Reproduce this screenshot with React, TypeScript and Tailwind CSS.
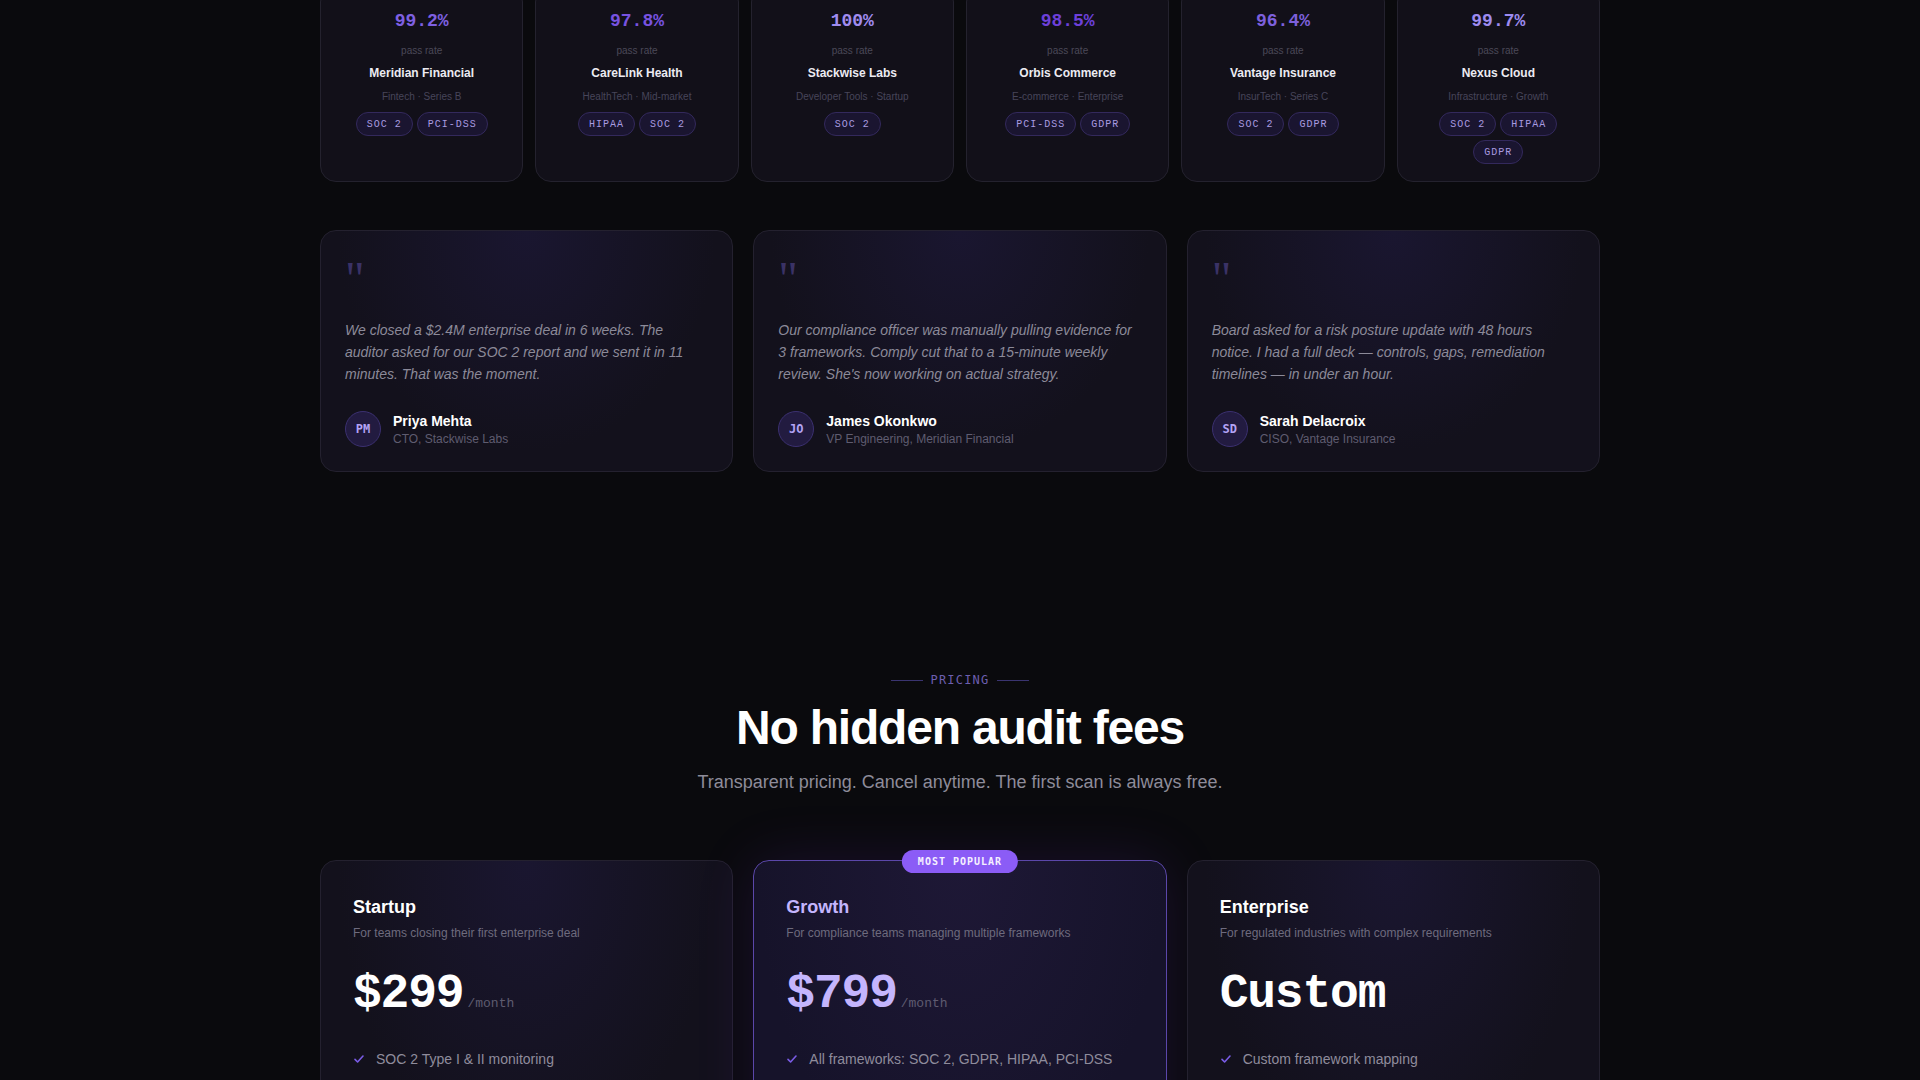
import React from "react";

type Stat = {
  rate: string;
  rateClass: string;
  name: string;
  meta: string;
  tags: string[];
};

const stats: Stat[] = [
  { rate: "99.2%", rateClass: "text-[#7f60e2]", name: "Meridian Financial", meta: "Fintech · Series B", tags: ["SOC 2", "PCI-DSS"] },
  { rate: "97.8%", rateClass: "text-[#7853e0]", name: "CareLink Health", meta: "HealthTech · Mid-market", tags: ["HIPAA", "SOC 2"] },
  { rate: "100%", rateClass: "text-[#a08cf0]", name: "Stackwise Labs", meta: "Developer Tools · Startup", tags: ["SOC 2"] },
  { rate: "98.5%", rateClass: "text-[#6d40d9]", name: "Orbis Commerce", meta: "E-commerce · Enterprise", tags: ["PCI-DSS", "GDPR"] },
  { rate: "96.4%", rateClass: "text-[#7d60dc]", name: "Vantage Insurance", meta: "InsurTech · Series C", tags: ["SOC 2", "GDPR"] },
  { rate: "99.7%", rateClass: "text-[#9d8bf0]", name: "Nexus Cloud", meta: "Infrastructure · Growth", tags: ["SOC 2", "HIPAA", "GDPR"] },
];

const quotes = [
  {
    text: "We closed a $2.4M enterprise deal in 6 weeks. The auditor asked for our SOC 2 report and we sent it in 11 minutes. That was the moment.",
    initials: "PM",
    name: "Priya Mehta",
    role: "CTO, Stackwise Labs",
  },
  {
    text: "Our compliance officer was manually pulling evidence for 3 frameworks. Comply cut that to a 15-minute weekly review. She's now working on actual strategy.",
    initials: "JO",
    name: "James Okonkwo",
    role: "VP Engineering, Meridian Financial",
  },
  {
    text: "Board asked for a risk posture update with 48 hours notice. I had a full deck — controls, gaps, remediation timelines — in under an hour.",
    initials: "SD",
    name: "Sarah Delacroix",
    role: "CISO, Vantage Insurance",
  },
];

type Plan = {
  name: string;
  desc: string;
  price: string;
  period?: string;
  featured?: boolean;
  features: string[];
};

const plans: Plan[] = [
  {
    name: "Startup",
    desc: "For teams closing their first enterprise deal",
    price: "$299",
    period: "/month",
    features: [
      "SOC 2 Type I & II monitoring",
      "Up to 40 integrations",
      "Auditor-ready evidence exports",
      "Slack & email alerts",
    ],
  },
  {
    name: "Growth",
    desc: "For compliance teams managing multiple frameworks",
    price: "$799",
    period: "/month",
    featured: true,
    features: [
      "All frameworks: SOC 2, GDPR, HIPAA, PCI-DSS",
      "Unlimited integrations",
      "Weekly risk posture reports",
      "Priority auditor support",
    ],
  },
  {
    name: "Enterprise",
    desc: "For regulated industries with complex requirements",
    price: "Custom",
    features: [
      "Custom framework mapping",
      "Dedicated compliance engineer",
      "SSO, SCIM & audit logs",
      "On-prem evidence storage",
    ],
  },
];

function Tag({ label }: { label: string }) {
  return (
    <span className="h-6 px-[10px] flex items-center rounded-full border border-[#33295c] bg-[#1a1530] font-['Liberation_Mono',monospace] text-[10px] tracking-[0.1em] text-[#a99be0]">
      {label}
    </span>
  );
}

function StatCard({ s }: { s: Stat }) {
  return (
    <div className="flex flex-col items-center rounded-2xl border border-[#24222e] bg-[#121019] px-4 pt-5 pb-[17px]">
      <div className={`font-['Liberation_Mono',monospace] text-lg leading-7 font-bold ${s.rateClass}`}>{s.rate}</div>
      <div className="mt-2 text-[10px] leading-[15px] text-[#4b4958]">pass rate</div>
      <div className="mt-[7px] text-xs leading-4 font-bold text-[#ecebf2]">{s.name}</div>
      <div className="mt-2 text-[10px] leading-[15px] text-[#47455a]">{s.meta}</div>
      <div className="mt-2 flex flex-wrap justify-center gap-1">
        {s.tags.map((t) => (
          <Tag key={t} label={t} />
        ))}
      </div>
    </div>
  );
}

function QuoteCard({ q }: { q: (typeof quotes)[number] }) {
  return (
    <div className="rounded-2xl border border-[#24212f] bg-[radial-gradient(ellipse_at_top,#1a1630_0%,#13111c_65%)] p-6">
      <div className="h-12 font-['Liberation_Serif',serif] text-5xl leading-none text-[#3a3266]">"</div>
      <p className="mt-4 text-sm leading-[22px] italic text-[#8c8a99]">{q.text}</p>
      <div className="mt-[26px] flex items-center gap-3">
        <div className="h-9 w-9 shrink-0 rounded-full border border-[#3b3070] bg-[#221b40] flex items-center justify-center font-['DejaVu_Sans_Mono',monospace] text-xs font-bold text-[#b3a3f5]">
          {q.initials}
        </div>
        <div className="flex flex-col">
          <span className="text-sm leading-5 font-bold text-white">{q.name}</span>
          <span className="text-xs leading-4 text-[#5f5c70]">{q.role}</span>
        </div>
      </div>
    </div>
  );
}

function CheckIcon() {
  return (
    <svg width="12" height="12" viewBox="0 0 12 12" fill="none" className="shrink-0">
      <path d="M2 6.4 4.6 9 10 3" stroke="#7a5ce6" strokeWidth="1.6" strokeLinecap="round" strokeLinejoin="round" />
    </svg>
  );
}

function PlanCard({ p }: { p: Plan }) {
  return (
    <div
      className={
        p.featured
          ? "relative rounded-2xl border border-[#5b47aa] bg-[radial-gradient(ellipse_at_top,#1e1836_0%,#16132a_70%)] p-8 shadow-[0_0_60px_rgba(124,58,237,0.14)]"
          : "relative rounded-2xl border border-[#24212f] bg-[radial-gradient(ellipse_at_top,#1a1630_0%,#13111c_65%)] p-8"
      }
    >
      {p.featured && (
        <div className="absolute -top-[11px] left-1/2 -translate-x-1/2 h-[23px] px-4 flex items-center rounded-full bg-[#8b5cf6] font-['DejaVu_Sans_Mono',monospace] text-[10px] font-bold tracking-[0.1em] text-[#f5f0ff]">
          MOST POPULAR
        </div>
      )}
      <div className={`text-lg leading-7 font-bold ${p.featured ? "text-[#c4b5fd]" : "text-white"}`}>{p.name}</div>
      <div className="mt-1 text-xs leading-4 text-[#6e6b7e]">{p.desc}</div>
      <div className="mt-[29px] flex items-baseline gap-1">
        <span
          className={`font-['Liberation_Mono',monospace] text-5xl leading-none font-bold tracking-tight ${
            p.featured ? "text-[#c4b5fd]" : "text-white"
          }`}
        >
          {p.price}
        </span>
        {p.period && (
          <span className="font-['Liberation_Mono',monospace] text-[13px] text-[#5f5c70]">{p.period}</span>
        )}
      </div>
      <ul className="mt-[31px] flex flex-col gap-3">
        {p.features.map((f) => (
          <li key={f} className="flex items-center gap-[11px] text-sm leading-5 text-[#8f8c9c]">
            <CheckIcon />
            {f}
          </li>
        ))}
      </ul>
    </div>
  );
}

export default function App() {
  return (
    <div className="min-h-screen bg-[#0a0a0d] font-['Liberation_Sans',Arial,sans-serif] pb-32">
      <div className="mx-auto w-[1280px]">
        {/* customer results */}
        <div className="-mt-[14px] grid grid-cols-6 gap-3">
          {stats.map((s) => (
            <StatCard key={s.name} s={s} />
          ))}
        </div>

        {/* testimonials */}
        <div className="mt-12 grid grid-cols-3 gap-5">
          {quotes.map((q) => (
            <QuoteCard key={q.name} q={q} />
          ))}
        </div>

        {/* pricing */}
        <section className="mt-[200px]">
          <div className="flex flex-col items-center text-center">
            <div className="flex items-center gap-2">
              <span className="h-px w-8 bg-[#3a3470]" />
              <span className="font-['DejaVu_Sans_Mono',monospace] text-xs leading-4 tracking-[0.1em] text-[#6d5fb0]">PRICING</span>
              <span className="h-px w-8 bg-[#3a3470]" />
            </div>
            <h2 className="mt-[14px] text-5xl leading-[1.1] font-bold tracking-tight text-white">No hidden audit fees</h2>
            <p className="mt-[13px] text-lg leading-7 text-[#8e8c9a]">
              Transparent pricing. Cancel anytime. The first scan is always free.
            </p>
          </div>
          <div className="mt-[64px] grid grid-cols-3 gap-5">
            {plans.map((p) => (
              <PlanCard key={p.name} p={p} />
            ))}
          </div>
        </section>
      </div>
    </div>
  );
}
